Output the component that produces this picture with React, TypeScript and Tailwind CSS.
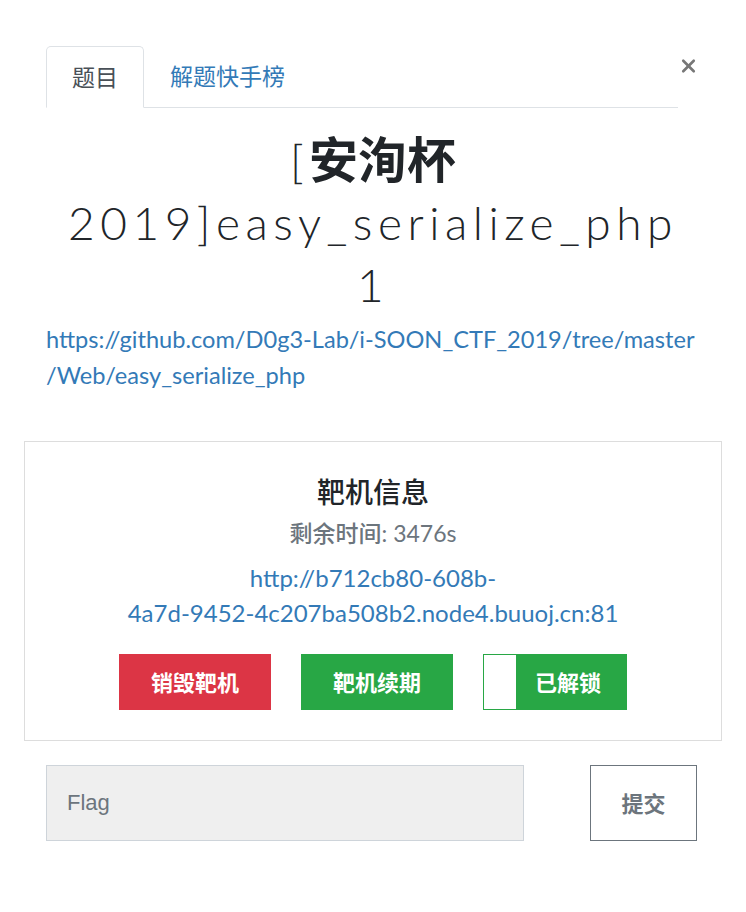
import { X } from "lucide-react";

export default function App() {
  return (
    <div className="min-h-[912px] w-[746px] bg-white text-[#212529] font-['Lato','Noto_Sans_CJK_SC',sans-serif]">
      <div className="px-[24px] pt-[46px]">
        {/* Header: tabs + close */}
        <div className="flex items-start px-[22px]">
          <div className="flex flex-1 border-b border-[#dee2e6]">
            <div className="-mb-px flex h-[62px] w-[98px] items-center justify-center rounded-t-[5px] border border-b-white border-[#dee2e6] bg-white text-[23px] text-[#495057]">
              题目
            </div>
            <div className="flex h-[61px] items-center px-[26px] text-[23px] text-[#337ab7]">
              解题快手榜
            </div>
          </div>
          <button className="mt-[7px] flex w-[22px] justify-end text-[#777]">
            <X size={26} strokeWidth={3} className="mr-[1px]" />
          </button>
        </div>

        {/* Title */}
        <div className="px-[22px] pt-[20px]">
          <h1 className="mx-auto max-w-[640px] text-center text-[46px] leading-[62px] font-light tracking-[0.12em] text-[#212529]">
            [<span className="text-[49px] leading-[62px] font-bold tracking-normal">安洵杯</span> 2019]easy_serialize_php 1
          </h1>
          <a className="mt-[5px] block text-[23.6px] leading-[36px] text-[#337ab7]">
            <span className="whitespace-nowrap">https://github.com/D0g3-Lab/i-SOON_CTF_2019/tree/master</span>
            <wbr />
            <span className="whitespace-nowrap">/Web/easy_serialize_php</span>
          </a>
        </div>

        {/* Target machine card */}
        <div className="mt-[48px] flex flex-col items-center border border-[#ddd] px-[20px] pt-[32px] pb-[30px]">
          <div className="text-[28px] leading-[36px] font-medium text-[#212529]">靶机信息</div>
          <div className="mt-[6px] text-[23px] leading-[34px] text-[#6c757d]">
            <span className="font-medium">剩余时间</span>: 3476s
          </div>
          <a className="mt-[10px] text-center text-[24px] leading-[35px] text-[#337ab7]">
            http://b712cb80-608b-
            <br />
            4a7d-9452-4c207ba508b2.node4.buuoj.cn:81
          </a>
          <div className="mt-[24px] flex gap-[30px]">
            <button className="flex h-[56px] w-[152px] items-center justify-center bg-[#dc3545] text-[22px] font-bold text-white">
              销毁靶机
            </button>
            <button className="flex h-[56px] w-[152px] items-center justify-center bg-[#28a745] text-[22px] font-bold text-white">
              靶机续期
            </button>
            <button className="flex h-[56px] w-[144px] items-stretch border border-[#28a745] bg-[#28a745]">
              <span className="w-[32px] bg-white" />
              <span className="flex flex-1 items-center justify-center pr-[6px] text-[22px] font-bold text-white">
                已解锁
              </span>
            </button>
          </div>
        </div>

        {/* Flag input */}
        <div className="mt-[24px] flex items-center px-[22px]">
          <input
            placeholder="Flag"
            className="h-[76px] w-[478px] border border-[#ced4da] bg-[#efefef] px-[20px] text-[22px] text-[#495057] placeholder:text-[#6c757d] font-['Liberation_Sans',sans-serif]"
          />
          <button className="ml-auto mr-[3px] h-[76px] w-[107px] border border-[#6c757d] bg-white text-[22px] font-bold text-[#6c757d]">
            提交
          </button>
        </div>
      </div>
    </div>
  );
}
